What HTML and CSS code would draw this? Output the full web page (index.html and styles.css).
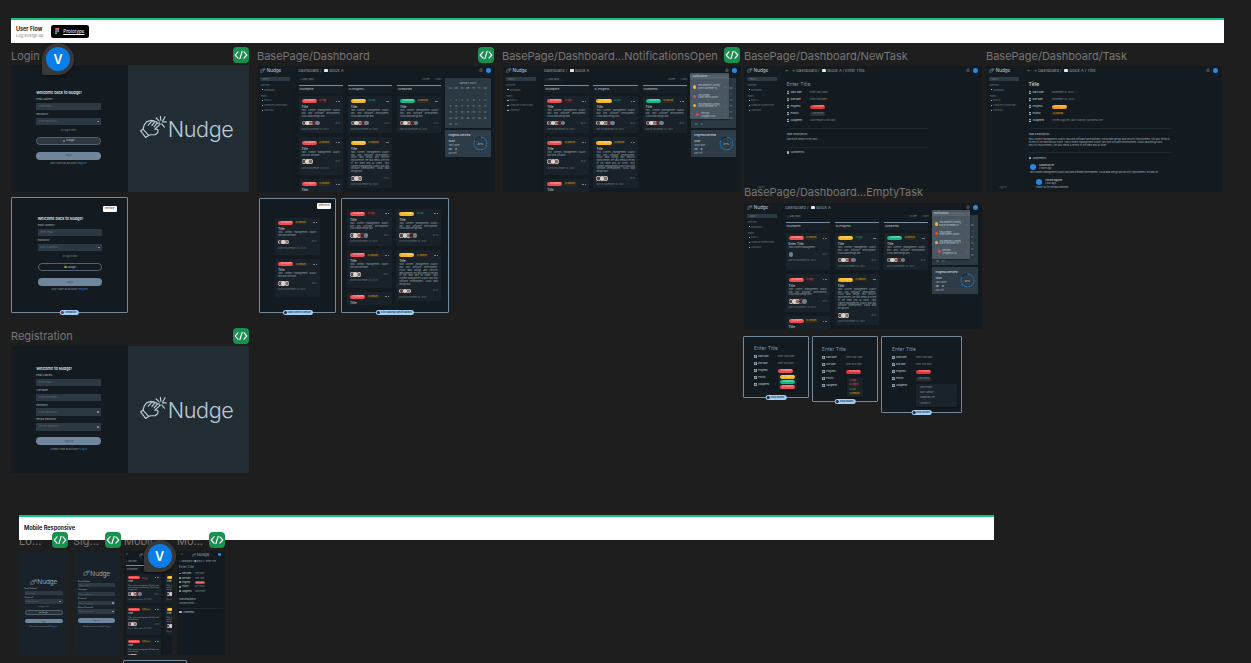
FILE: index.html
```html
<!DOCTYPE html>
<html lang="en">
<head>
<meta charset="utf-8">
<title>Nudge – User Flow</title>
<link rel="stylesheet" href="styles.css">
</head>
<body>
<svg class="defs" width="0" height="0">
  <symbol id="hand" viewBox="0 0 82 74">
    <g fill="none" stroke="currentColor" stroke-width="3.6" stroke-linejoin="round" stroke-linecap="round">
      <path d="M2 48 L9 43 L26 62 L17 68 Z"/>
      <path d="M9 43 L13 30 L20 21 L31 17 Q36 15 39 19 M25 31 L35 20 Q40 14 45 20 L36 32 M45 21 Q51 18 52 24 L43 36 M52 26 Q60 20 61 28 L45 43 Q53 42 55 46 L54 53 L46 60 L33 60 L26 62"/>
      <path d="M62 4 L63 16 M76 5 L69 18 M69 21 L80 21 M66 27 L74 37 M49 9 L58 18"/>
    </g>
  </symbol>
  <symbol id="code" viewBox="0 0 16 16">
    <path d="M5 4.8 L2.2 8 L5 11.2 M11 4.8 L13.8 8 L11 11.2 M9.1 4.4 L6.9 11.6" fill="none" stroke="#fff" stroke-width="1.2" stroke-linecap="round" stroke-linejoin="round"/>
  </symbol>
  <symbol id="bell" viewBox="0 0 10 10">
    <path d="M1.5 7.5 L2.5 6 V4 Q2.5 1.5 5 1.5 Q7.5 1.5 7.5 4 V6 L8.5 7.5 Z M4 9 H6" fill="none" stroke="currentColor"/>
  </symbol>
  <symbol id="figma" viewBox="0 0 8 12">
    <path d="M2 0H4V4H2A2 2 0 0 1 2 0Z" fill="#f24e1e"/><path d="M4 0H6A2 2 0 0 1 6 4H4Z" fill="#ff7262"/>
    <path d="M2 4H4V8H2A2 2 0 0 1 2 4Z" fill="#a259ff"/><circle cx="6" cy="6" r="2" fill="#1abcfe"/>
    <path d="M2 8H4V10A2 2 0 1 1 2 8Z" fill="#0acf83"/>
  </symbol>
</svg>
<main class="canvas">
  <span class="label l-login">Login</span>
  <span class="label l-dash">BasePage/Dashboard</span>
  <span class="label l-notif">BasePage/Dashboard...NotificationsOpen</span>
  <span class="label l-new">BasePage/Dashboard/NewTask</span>
  <span class="label l-task">BasePage/Dashboard/Task</span>
  <span class="label l-reg">Registration</span>
  <span class="label l-m1">Lo...</span>
  <span class="label l-m2">Sig...</span>
  <span class="label l-m3">Mobil...</span>
  <span class="label l-m4">Mo...</span>

  <header class="banner banner-flow">
    <div class="banner-text"><b>User Flow</b><span>Log In/Sign up</span></div>
    <a class="proto"><svg><use href="#figma"/></svg><u>Prototype</u></a>
  </header>
  <header class="banner banner-mobile"><div class="banner-text"><b>Mobile Responsive</b></div></header>

  <section class="frame split f-login" data-auth="login"></section>
  <section class="frame split f-reg" data-auth="register"></section>
  <section class="frame f-dash" data-board="calendar"></section>
  <section class="frame f-notif" data-board="notifications"></section>
  <section class="frame f-empty" data-board="empty"></section>
  <section class="frame f-new" data-task="new"></section>
  <section class="frame f-task" data-task="full"></section>
  <span class="label l-empty">BasePage/Dashboard...EmptyTask</span>

  <section class="variant v-login" data-variant="login"></section>
  <section class="variant v-cards" data-variant="cards"></section>
  <section class="variant v-spacing" data-variant="spacing"></section>
  <section class="variant v-drop1" data-variant="progress"></section>
  <section class="variant v-drop2" data-variant="priority"></section>
  <section class="variant v-drop3" data-variant="assignee"></section>
  <section class="variant v-mobile"></section>

  <section class="frame phone f-m1" data-phone="login"></section>
  <section class="frame phone f-m2" data-phone="register"></section>
  <section class="frame phone f-m3" data-phone="board"></section>
  <section class="frame phone f-m4" data-phone="task"></section>

  <svg class="code c1"><use href="#code"/></svg>
  <svg class="code c2"><use href="#code"/></svg>
  <svg class="code c3"><use href="#code"/></svg>
  <svg class="code c4"><use href="#code"/></svg>
  <svg class="code c5"><use href="#code"/></svg>
  <svg class="code c6"><use href="#code"/></svg>
  <svg class="code c7"><use href="#code"/></svg>
  <div class="pin p1"><span>V</span></div>
  <div class="pin p2"><span>V</span></div>
</main>
<script src="app.js"></script>
</body>
</html>
```

FILE: styles.css
```css
* { box-sizing: border-box; }
body { margin: 0; background: #1e1e1e; font-family: Inter, "Liberation Sans", sans-serif; }
.defs { position: absolute; }
.canvas { position: relative; width: 1251px; height: 663px; overflow: hidden; background: #1e1e1e; }

/* frame names */
.label { position: absolute; height: 14px; line-height: 14px; font-size: 11px; letter-spacing: 0; color: #767676; white-space: nowrap; }
.l-login { left: 11px; top: 49px; }
.l-dash { left: 257px; top: 49px; }
.l-notif { left: 502px; top: 49px; }
.l-new { left: 744px; top: 49px; }
.l-task { left: 986px; top: 49px; }
.l-empty { left: 744px; top: 185px; }
.l-reg { left: 11px; top: 329px; }
.l-m1 { left: 19px; top: 534px; }
.l-m2 { left: 73px; top: 534px; }
.l-m3 { left: 124px; top: 534px; }
.l-m4 { left: 177px; top: 534px; }

/* section banners */
.banner { position: absolute; display: flex; align-items: center; gap: 7px; height: 25px; padding: 0 5px; background: #fff; border-top: 2px solid #12c47c; }
.banner-flow { left: 11px; top: 18px; width: 1212.5px; }
.banner-mobile { left: 19px; top: 515px; width: 975px; padding-bottom: 2px; }
.banner-text { display: flex; flex-direction: column; gap: 1px; min-width: 27.5px; font-size: 5.6px; line-height: 6px; color: #000; white-space: nowrap; }
.banner-flow .banner-text { width: 27.5px; }
.banner-text span { font-size: 4px; line-height: 5px; color: #777; }
.banner-text b { font-weight: 600; }
.banner-flow b { font-size: 5.5px; }
.banner-mobile b { font-size: 5.6px; }
.proto { display: flex; align-items: center; gap: 4.5px; width: 38px; height: 13px; padding: 0 4px; border-radius: 2.5px; background: #000; color: #fff; font-size: 4.6px; }
.proto svg { width: 4.5px; height: 6.5px; }

.code { position: absolute; width: 16px; height: 16px; border-radius: 4px; background: #18904f; }
.c1 { left: 233px; top: 47px; }
.c2 { left: 478px; top: 47px; }
.c3 { left: 724px; top: 47px; }
.c4 { left: 233px; top: 328px; }
.c5 { left: 52px; top: 532px; }
.c6 { left: 105px; top: 532px; }
.c7 { left: 209px; top: 532px; }
.pin { position: absolute; display: grid; place-items: center; width: 32px; height: 32px; border-radius: 16px 16px 16px 2px; background: #383838; box-shadow: 0 1px 3px #0008; }
.pin span { display: grid; place-items: center; width: 24px; height: 24px; border-radius: 50%; background: #0a7de6; color: #fff; font-size: 12.5px; font-weight: 600; }
.p1 { left: 42px; top: 43px; }
.p2 { left: 143.5px; top: 540px; }

/* frames on the canvas */
.frame { position: absolute; overflow: hidden; background: #141b20; color: #9aa7b0; font-size: 2.5px; line-height: 3px; }
.f-login { left: 11px; top: 65px; width: 238px; height: 127px; }
.f-reg { left: 11px; top: 346px; width: 238px; height: 127px; }
.f-dash { left: 257px; top: 66px; width: 238px; height: 126px; }
.f-notif { left: 502.7px; top: 66px; width: 238px; height: 126px; }
.f-new { left: 744px; top: 66px; width: 238px; height: 126px; }
.f-task { left: 986px; top: 66px; width: 236px; height: 126px; }
.f-empty { left: 744px; top: 203px; width: 238px; height: 126px; }
.f-m1 { left: 19.5px; top: 551px; width: 48px; height: 104px; }
.f-m2 { left: 73px; top: 551px; width: 47px; height: 104px; }
.f-m3 { left: 124px; top: 551px; width: 48px; height: 104px; }
.f-m4 { left: 177px; top: 551px; width: 48px; height: 104px; }

/* authentication */
.split { display: grid; grid-template-columns: 117px 1fr; }
.split-left { padding: 25px 27px 0 25.3px; }
.f-reg .split-left { padding-top: 20px; }
.split-right { display: flex; align-items: center; background: #222c33; color: #b9cbd9; padding: 0 0 0 12px; }
.split-right svg { width: 27px; height: 24.4px; margin-top: -2px; }
.wordmark { margin-left: .8px; font-size: 21.6px; line-height: 24px; font-weight: 300; letter-spacing: -.4px; }
.form { display: flex; flex-direction: column; color: #a9b5bd; font-size: 2.4px; }
.form h2 { margin: 0 0 2.6px; font-size: 3.75px; line-height: 5.5px; font-weight: 600; color: #dfe6ea; white-space: nowrap; }
.form label { height: 4px; line-height: 4px; margin-bottom: .7px; }
.input { display: flex; align-items: center; justify-content: space-between; height: 7.5px; padding: 0 2.5px; margin-bottom: 2.6px; border-radius: .6px; background: #2c3943; color: #5c6b77; }
.eye { width: 2px; height: 1.6px; border-radius: 50%; background: #93a3af; }
.or { align-self: center; height: 4px; line-height: 4px; margin: 1.1px 0 4.2px; color: #7d8991; }
.btn { display: flex; align-items: center; justify-content: center; gap: 1px; height: 8px; border-radius: 4px; }
.btn-google { border: 1px solid #52616c; background: #2b3841; color: #b8c4cc; margin-bottom: 7px; }
.btn-google::before { content: ""; width: 2.5px; height: 2.5px; border-radius: 50%; background: #8d9154; }
.btn-main { background: #70869a; color: #34424e; margin-bottom: 2.3px; }
.f-reg .btn-main { margin-top: 4.2px; }
.foot { align-self: center; height: 4px; line-height: 4px; color: #87939b; white-space: nowrap; }
.foot i { font-style: normal; color: #3b82d6; }

/* application shell */
.app { display: grid; grid-template-columns: 36.5px 1fr; height: 100%; }
.side { display: flex; flex-direction: column; padding: 2.2px 3.4px 0; color: #6d7981; font-size: 2.05px; line-height: 3px; background: #141c21; white-space: nowrap; }
.brand { display: flex; align-items: center; gap: .8px; height: 5.5px; color: #c5d1da; font-size: 4.6px; line-height: 5px; }
.brand svg { width: 5.6px; height: 5px; }
.search { height: 4px; margin: 3.6px 0 2.7px; padding: .5px 2px; background: #2c3a44; border-radius: .5px; }
.side p { margin: 0 0 1.6px; }
.side .gap { margin-top: 1px; }
.side .item { padding-left: 1.4px; margin-bottom: 2px; }
.side .item::before { content: ""; display: inline-block; width: 1.5px; height: 1.2px; margin: 0 .8px .4px 0; background: #aab3b9; }
.side .out { margin: auto 0 2.6px 10px; }
.top { display: flex; align-items: center; gap: 1.5px; height: 8.7px; padding: 0 4px 0 4.7px; background: #131b20; color: #919ea7; font-size: 4px; line-height: 5px; white-space: pre; }
.top .folder { width: 3.8px; height: 3px; background: #dfe6e9; border-radius: .4px; }
.top .bell { width: 4px; height: 4px; margin-left: auto; color: #a3adb3; }
.top .user { width: 4.6px; height: 4.6px; margin-left: 2px; border-radius: 50%; background: #2788dc; }
.work { display: grid; grid-template-columns: 143px 45.5px; gap: 3.5px; padding-left: 5px; position: relative; }
.tools { display: flex; align-items: center; gap: 5px; height: 10.5px; color: #7d8992; font-size: 2.4px; }
.tools span:first-child { margin-right: auto; padding: .5px 2px; background: #192228; }
.cols { display: grid; grid-template-columns: repeat(3, 44.5px); gap: 4.7px; align-items: start; }
.col { display: flex; flex-direction: column; gap: 4px; }
.col-head { height: 8.3px; margin-bottom: -1.6px; padding: 2.3px 1px; border-top: 1px solid #798d9b; background: #172026; color: #c6d0d6; font-size: 2.7px; }

.card { display: flex; flex-direction: column; min-height: 37.5px; padding: 3.3px 3px 2px; border-radius: .7px; background: #192228; color: #98a4ac; }
.tags { display: flex; align-items: center; gap: 1.5px; height: 4px; }
.tag { display: inline-block; width: 15.3px; height: 4px; border-radius: 2px; padding-left: 3px; font-size: 2.1px; line-height: 4px; color: #ffffffb0; background: #ee4c50; white-space: nowrap; }
.tag.yellow { background: #f3b61f; }
.tag.green { background: #16b783; }
.tag.red { background: #e03436; }
.tag.orange { background: #f29a1f; }
.tag.gray { background: #2a3238; color: #7d878e; }
.prio { height: 3.4px; padding: 0 1px; border-radius: 1.5px; font-size: 2px; line-height: 3.4px; color: #cf9c27; background: #2d2b20; white-space: nowrap; }
.prio.high { color: #e04b50; background: #2a2026; }
.prio.low { color: #29a886; background: #182b2b; }
.dots { display: flex; gap: .5px; margin-left: auto; }
.dots i { width: .9px; height: .9px; border-radius: 50%; background: #b2bcc3; }
.card h3 { margin: 2.1px 0 1px; font-size: 3.1px; line-height: 4px; font-weight: 500; color: #ccd5da; }
.card p { margin: 0; font-size: 2.15px; line-height: 2.75px; text-align: justify; }
.lines-1 { height: 2.75px; }
.lines-2 { height: 5.5px; }
.lines-3 { height: 8.25px; }
.lines-8 { height: 22px; }
.people { display: flex; align-items: center; height: 5px; margin: 2px 0 2.3px; font-size: 2.1px; }
.people i { width: 4.6px; height: 4.6px; margin-right: -1.2px; border-radius: 50%; background: radial-gradient(circle, #5b4340 50%, #d0d2d4 62%); }
.people i:nth-child(2) { background: #d9d3cf; }
.people i:nth-child(3) { background: radial-gradient(circle, #8a6b5e 40%, #d8d2cd 62%); }
.people i:nth-child(4) { background: radial-gradient(circle, #3b2326 40%, #a33a42 62%); }
.people i.more { background: #71818d; }
.people span { margin-left: auto; color: #75818a; }
.card small { font-size: 2.1px; line-height: 3px; color: #6f7b83; white-space: nowrap; }

.aside { display: flex; flex-direction: column; gap: 2.7px; padding-top: 3.8px; }
.cal { height: 49.3px; padding: 3.3px 2.5px; border-radius: .6px; background: #2b3943; color: #9aa8b2; text-align: center; }
.cal b { display: block; margin-bottom: 1.2px; font-size: 2.5px; font-weight: 500; }
.days { display: grid; grid-template-columns: repeat(7, 1fr); font-size: 2.1px; line-height: 6px; }
.prog { display: flex; justify-content: space-between; height: 26.5px; padding: 3.4px 2.6px 2px 3.5px; border-radius: .6px; background: #2e3c47; color: #a3b1bb; font-size: 2px; line-height: 2.4px; }
.prog div { display: flex; flex-direction: column; width: 20px; white-space: nowrap; }
.prog b { font-size: 2.4px; line-height: 3.6px; font-weight: 600; color: #d2dbe1; }
.prog b + b { margin-top: 3px; }
.prog .pair { margin-top: 1.8px; }
.prog svg { width: 15px; height: 15px; margin-top: 2px; }
.pop { position: absolute; left: 151px; top: -1.3px; width: 38.5px; height: 46px; padding: 1.6px 2.5px; background: #4d5a65e8; border-radius: .8px; color: #bcc8d0; font-size: 1.9px; line-height: 2.5px; white-space: nowrap; box-shadow: 0 1px 2px #0006; }
.f-empty .pop { height: 48.5px; }
.pop h4 { margin: 0 -2.5px 3.4px; padding: 0 2.5px 1px; background: #56636e; font-size: 2.4px; line-height: 3px; font-weight: 500; }
.pop div { display: grid; grid-template-columns: 3px 1fr 1.5px; gap: 1.8px; align-items: center; height: 9.2px; padding-left: .5px; }
.pop div::before { content: ""; width: 3.2px; height: 3.2px; border-radius: 50%; background: #f3b61f; }
.pop div.r::before { background: #e3494e; }
.pop div:last-child { padding-left: 3.5px; }

/* task detail */
.detail { padding: 6.3px 0 0 6px; width: 148px; }
.detail h1, .variant h1 { margin: 0; font-size: 5px; line-height: 6.4px; font-weight: 400; color: #84919a; }
.f-task h1 { font-weight: 600; color: #c9d3d9; }
.rows { display: grid; grid-auto-rows: 7px; align-items: center; margin-top: 1.8px; }
.row { display: grid; grid-template-columns: 4px 19.6px 1fr; align-items: center; height: 7px; font-size: 2.35px; color: #7f8b93; white-space: nowrap; }
.row::before { content: ""; width: 2.6px; height: 2.8px; background: radial-gradient(circle, #3a454c 30%, #aeb9c0 60%); border-radius: .6px; }
.row b { font-weight: 500; color: #bcc6cc; }
.row .tag, .row .prio { justify-self: start; }
.desc { margin-top: 3.4px; padding: 4.5px 0; border-top: 1px solid #1d272d; border-bottom: 1px solid #1d272d; font-size: 2.3px; line-height: 2.8px; }
.desc b, .comm { display: block; font-size: 2.6px; line-height: 3.4px; font-weight: 500; color: #aab5bc; }
.desc p { margin: 3px 0 0; }
.comm { margin-top: 3.5px; }
.comm::before { content: ""; display: inline-block; width: 2.8px; height: 2.4px; margin-right: 1.4px; border-radius: .4px; background: #a9b4bb; }
.reply { display: grid; grid-template-columns: 6px 1fr; gap: 0 3.5px; margin-top: 3.2px; padding-left: 1px; font-size: 2.2px; line-height: 3px; white-space: nowrap; color: #a9b4bb; }
.reply::before { content: ""; width: 6px; height: 6px; border-radius: 50%; background: #2788dc; grid-row: span 2; }
.reply em { grid-column: 1 / -1; font-style: normal; margin-top: 1px; }
.reply.nested { margin-left: 6px; margin-top: 5px; }

/* prototype variants */
.variant { position: absolute; border: 1.3px solid #74899a; border-radius: 1px; background: #141b20; font-size: 2.5px; line-height: 3px; color: #87939b; }
.v-login { left: 10.5px; top: 197px; width: 117.5px; height: 115.5px; padding: 18.2px 25px 0 26.2px; }
.v-login .btn-google { background: none; }
.v-cards { left: 259px; top: 198px; width: 77px; height: 115px; padding: 18.5px 15px; display: flex; flex-direction: column; gap: 4px; }
.v-cards .card { width: 44.5px; }
.v-spacing { left: 340.5px; top: 198px; width: 108.5px; height: 115px; padding: 9.5px 5.5px 7px; }
.v-spacing .cols { height: 96px; overflow: hidden; grid-template-columns: repeat(2, 44.5px); }
.v-drop1 { left: 743px; top: 336px; width: 66px; height: 62px; padding: 7.8px 9px 0 10px; }
.v-drop2 { left: 812px; top: 336px; width: 66px; height: 66px; padding: 8.5px 9px 0 9px; }
.v-drop3 { left: 881px; top: 336px; width: 81px; height: 77px; padding: 8.5px 9px 0 10px; }
.v-mobile { left: 123px; top: 660px; width: 64px; height: 10px; }
.variant .rows { margin-top: 2.2px; }
.variant .row { grid-template-columns: 4px 20px 1fr; font-size: 2.2px; }
.pill { position: absolute; left: 50%; bottom: -3.2px; transform: translateX(-50%); display: flex; align-items: center; gap: 1px; height: 5px; padding: 0 2px 0 1px; border-radius: 2.5px; background: #a7d0f6; color: #12283c; font-size: 2.3px; font-weight: 600; white-space: nowrap; }
.pill::before { content: ""; width: 3px; height: 3px; border-radius: 50%; background: #14293b; }
.v-login .pill::before { background: #8b2637; }
.chip { position: absolute; right: 10.5px; top: 7.6px; width: 14px; height: 6px; border-radius: 1px; background: #fff; color: #333; font-size: 2.3px; line-height: 6px; text-align: center; }
.v-cards .chip { right: 4px; top: 4px; }
.menu { position: absolute; display: flex; flex-direction: column; padding: 1px 1.5px; background: #1a2329; box-shadow: 0 1px 2px #0006; }
.v-drop1 .menu { left: 34px; top: 37px; width: 19px; gap: .8px; }
.v-drop2 .menu { left: 34px; top: 41px; width: 16px; height: 19px; gap: .9px; align-items: flex-start; }
.v-drop3 .menu { left: 34px; top: 47px; width: 41px; height: 22.5px; padding: 2px 4px; gap: 2.2px; font-size: 2.2px; }

/* phones */
.phone { font-size: 2px; line-height: 2.4px; }
.f-m1, .f-m2 { background: #192229; }
.phone .logo { display: flex; align-items: center; justify-content: center; gap: .6px; color: #b9cbd9; font-size: 6.4px; line-height: 8px; font-weight: 300; }
.phone .logo svg { width: 7px; height: 6.3px; }
.phone .form { padding: 0 5px; font-size: 1.8px; }
.phone .form label { height: 3px; line-height: 3px; margin-bottom: .3px; }
.phone .input { height: 4.4px; margin-bottom: 1px; padding: 0 1.2px; }
.phone .or { height: 3px; line-height: 3px; margin: .6px 0 1.8px; }
.phone .btn { height: 4.6px; }
.phone .btn-google { margin-bottom: 4px; background: #242f37; }
.phone .btn-google::before { width: 1.6px; height: 1.6px; }
.phone .btn-main { margin-bottom: 1px; }
.f-m1 { padding-top: 27px; }
.f-m1 .form { margin-top: 1.3px; }
.f-m2 { padding-top: 18.5px; }
.f-m2 .form { margin-top: 2px; }
.f-m2 .input { margin-bottom: 1.2px; }
.f-m2 .btn-main { margin-top: 3.4px; }
.mtop { display: flex; align-items: center; justify-content: space-between; height: 7px; padding: 0 2px; color: #a9b5bd; }
.mtop .logo { font-size: 4px; line-height: 5px; }
.mtop .logo svg { width: 4px; height: 4px; }
.mtop .user { width: 2.6px; height: 2.6px; border-radius: 50%; background: #2788dc; }
.f-m3 .bar { height: 8px; margin: 0 13px 0 2px; padding-top: 2px; border-bottom: 1px solid #798d9b; }
.f-m3 .bar + p { margin: 2px 3px; height: 4px; }
.f-m3 .cols { grid-template-columns: 35px 35px; gap: 3.5px; padding-left: 2px; }
.f-m3 .col { gap: 3.2px; }
.f-m3 .card { height: 28.8px; min-height: 28.8px; padding: 2.3px 2px 1px; }
.f-m3 .tag { width: 12px; height: 3px; padding-left: 1.6px; line-height: 3px; font-size: 1.7px; }
.f-m3 .tags { height: 3px; gap: 1px; }
.f-m3 .prio { height: 2.6px; font-size: 1.6px; line-height: 2.6px; }
.f-m3 .card h3 { margin: 1px 0 .5px; font-size: 2.4px; line-height: 3px; }
.f-m3 .card p { font-size: 1.7px; line-height: 2.3px; }
.f-m3 .lines-2 { height: 4.6px; }
.f-m3 .lines-3 { height: 6.9px; }
.f-m3 .people { height: 4px; margin: 1.6px 0 1.3px; font-size: 1.8px; }
.f-m3 .people i { width: 3.8px; height: 3.8px; }
.f-m3 .card small { font-size: 1.8px; line-height: 2.4px; }
.f-m4 { padding: 0 2px; white-space: nowrap; }
.f-m4 h1 { margin: 3px 0 2px; font-size: 3.1px; line-height: 3.4px; font-weight: 400; }
.f-m4 .crumb { margin-top: 2.5px; font-size: 2.1px; }
.f-m4 .row { grid-template-columns: 3px 13px 1fr; height: 4.4px; font-size: 1.9px; }
.f-m4 .row::before { width: 1.8px; height: 1.8px; }
.f-m4 .rows { display: block; margin: 0; }
.f-m4 .tag { width: 10px; height: 2.8px; padding-left: 1px; line-height: 2.8px; font-size: 1.6px; }
.f-m4 .desc { border-top: 0; padding: 1px 0 3px; font-size: 1.9px; line-height: 2.4px; }
.f-m4 .desc p { margin-top: 1.2px; }
.f-m4 .desc b, .f-m4 .comm { font-size: 2.1px; }
.f-m4 .comm { margin-top: 2px; }
```

FILE: app.js
```js
const all = (key, render) =>
  document.querySelectorAll(`[data-${key}]`).forEach(el => { el.innerHTML = render(el.dataset[key]); });

const hand = '<svg><use href="#hand"/></svg>';
const lorem = 'Task content management Quality task and software development, Cloud data design and security improvement, the task needs a review of the team and all notes. ';
/* Whole words that fill about the given number of card lines */
const excerpt = lines => {
  const text = lorem.repeat(2).slice(0, lines * 31 - 4);
  return text.slice(0, text.lastIndexOf(' '));
};
const tag = (color, text) => `<span class="tag ${color}">${text}</span>`;
const prio = (kind, text) => `<span class="prio ${kind}">○ ${text}</span>`;

/* Forms */
const field = (name, hint, eye) =>
  `<label>${name}</label><div class="input"><span>${hint}</span>${eye ? '<i class="eye"></i>' : ''}</div>`;
const loginForm = title => `<div class="form">${title ? '<h2>Welcome back to Nudge!</h2>' : ''}
  ${field('Email Address*', 'Enter email')}${field('Password*', 'Enter password', true)}
  <span class="or">or log in with</span><div class="btn btn-google">Google</div>
  <div class="btn btn-main">Log in</div><span class="foot">Don't have an account? <i>Register</i></span></div>`;
const registerForm = title => `<div class="form">${title ? '<h2>Welcome to Nudge!</h2>' : ''}
  ${field('Email Address', 'Enter email')}${field('Username', 'Enter username')}
  ${field('Password', 'Enter password', true)}${field('Retype Password', 'Retype password', true)}
  <div class="btn btn-main">Sign up</div><span class="foot">Already have an account? <i>Log in</i></span></div>`;
all('auth', kind => `<div class="split-left">${kind === 'login' ? loginForm(true) : registerForm(true)}</div>
  <div class="split-right">${hand}<span class="wordmark">Nudge</span></div>`);

/* Cards */
const card = (color, kind, lines, people = 3, title = 'Title') => {
  const state = { '': 'Incomplete', yellow: 'In-Progress', green: 'Completed' }[color];
  const level = { high: 'High', low: 'Low', '': 'Medium' }[kind];
  const faces = '<i></i>'.repeat(Math.min(people, 4)) + (people > 3 || people === 0 ? '<i class="more"></i>' : '');
  return `<article class="card"><div class="tags">${tag(color, state)}${prio(kind, level)}<span class="dots"><i></i><i></i><i></i></span></div>
    <h3>${title}</h3><p class="lines-${lines}">${excerpt(lines)}</p>
    <div class="people">${faces}<span>▢ 12</span></div><small>Due on November 20, 2023</small></article>`;
};
const col = (name, cards) => `<div class="col">${name ? `<div class="col-head">${name}</div>` : ''}${cards.join('')}</div>`;

/* Application shell */
const shell = (crumb, body) => `<div class="app"><nav class="side">
  <div class="brand">${hand}Nudge</div><div class="search">Search</div>
  <p>Overview</p><p class="item">Dashboard</p><p class="gap">Teams</p>
  <p class="item">Block A</p><p class="item">Computer Science Dept.</p><p class="item">Add Block</p><p class="out">Log out</p></nav>
  <div><div class="top">${crumb}<svg class="bell"><use href="#bell"/></svg><i class="user"></i></div>${body}</div></div>`;
const dates = [...Array(6).fill(''), ...Array.from({ length: 31 }, (_, i) => i + 1)];
const calendar = `<div class="cal"><b>January 2024</b><div class="days">${['Su','Mo','Tu','We','Th','Fr','Sa', ...dates]
  .map(d => `<span>${d}</span>`).join('')}</div></div>`;
const progress = `<div class="prog"><div><b>Progress Overview</b><b>12/87</b><span>Tasks done</span><b class="pair">20 &nbsp; &nbsp; &nbsp;8</b><span>Days left</span></div>
  <svg viewBox="0 0 30 30"><circle cx="15" cy="15" r="13" fill="none" stroke="#18242d" stroke-width="2"/>
  <path d="M15 2A13 13 0 1 1 4 8" fill="none" stroke="#2878bd" stroke-width="2"/>
  <text x="15" y="17" text-anchor="middle" font-size="5" fill="#c3ced6">87%</text></svg></div>`;
const notes = `<div class="pop"><h4>Notifications</h4><div><span>Task deadline is coming<br>Due on November 20</span>›</div>
  <div class="r"><span>Task overdue<br>Submit before January</span>›</div><div><span>Task deadline is coming<br>Due on November 20</span>›</div>
  <div class="r"><span>New task<br>Assigned to you</span>›</div></div>`;

all('board', kind => {
  const incomplete = [card('', 'high', 3, 4), card('', '', 2), card('', '', 2)];
  if (kind === 'empty') incomplete.splice(0, 3, card('', '', 1, 0, 'Enter Title'), card('', 'high', 3, 4), card('', '', 2));
  return shell('Dashboard / <i class="folder"></i>Block A', `<div class="work"><div>
    <div class="tools"><span>+ Add Task</span><span>⊽ Filter</span><span>≡ Sort</span></div><div class="cols">
    ${col('Incomplete', incomplete)}${col('In-Progress', [card('yellow', 'low', 3, 4), card('yellow', '', 8)])}
    ${col('Completed', [card('green', '', 3, 4)])}</div></div>
    <div class="aside">${calendar}${progress}</div>${kind === 'calendar' ? '' : notes}</div>`);
});

/* Task detail */
const row = (name, value) => `<div class="row"><b>${name}</b>${value}</div>`;
const wrap = text => `<span>${text}</span>`;
all('task', kind => {
  const full = kind === 'full';
  const title = full ? 'Title' : 'Enter Title';
  return shell(`←  → Dashboard / <i class="folder"></i>Block A / ${title}`, `<div class="detail"><h1>${title}</h1><div class="rows">
    ${row('Start Date', wrap(full ? 'November 13, 2023' : 'Enter Start Date'))}${row('Due Date', wrap(full ? 'November 20, 2023' : 'Enter Due Date'))}
    ${row('Progress', full ? tag('orange', 'In-Progress') : tag('red', 'Incomplete'))}
    ${row('Priority', full ? prio('', 'Medium') : tag('gray', 'Set Priority'))}
    ${row('Assignees', wrap(full ? 'Vincent Nguyen, Mary Watson, Samantha Lee' : 'Add People to this task'))}</div>
    <div class="desc"><b>Task Description</b><p>${full ? lorem.repeat(2) : 'Add more details to this task...'}</p></div>
    <span class="comm">Comments</span>${full ? `<div class="reply"><b>Samantha Lee</b><span>2 hours ago</span><em>${lorem.slice(0, 118)}</em></div>
    <div class="reply nested"><b>Vincent Nguyen</b><span>1 hour ago</span><em>Thank you for the task reminder.</em></div>` : ''}</div>`);
});

/* Variants */
const enter = (state, level) => `<h1>Enter Title</h1><div class="rows">${row('Start Date', wrap('Enter Start Date'))}
  ${row('Due Date', wrap('Enter Due Date'))}${row('Progress', tag(state, 'Incomplete'))}${row('Priority', level)}${row('Assignees', '')}</div>`;
const variants = {
  login: ['Animation', () => `<span class="chip">Interface</span>${loginForm(true)}`],
  cards: ['Card context overlay', () => `<span class="chip">Reference</span>${card('', '', 2)}${card('', '', 2)}`],
  spacing: ['Grid Spacing/Specifications', () => `<div class="cols">${col('', [card('', 'high', 3, 4), card('', '', 2), card('', '', 2)])}
    ${col('', [card('yellow', 'low', 3, 4), card('yellow', '', 8)])}</div>`],
  progress: ['Drop Downs', () => `${enter('', '')}<div class="menu">${tag('yellow', 'In-Progress')}${tag('green', 'Completed')}${tag('', 'Incomplete')}</div>`],
  priority: ['Drop Downs', () => `${enter('red', '')}<div class="menu">${prio('high', 'High')}${prio('high', 'Urgent')}${prio('low', 'Low')}${prio('', 'Medium')}</div>`],
  assignee: ['Drop Downs', () => `${enter('red', tag('gray', 'Set Priority'))}<div class="menu"><span>Add People</span><span>Mary Watson</span><span>Samantha Lee</span><span>Vincent N</span></div>`],
};
all('variant', kind => `${variants[kind][1]()}<span class="pill">${variants[kind][0]}</span>`);

/* Phones */
const logo = `<div class="logo">${hand}Nudge</div>`;
const phones = {
  login: () => logo + loginForm(false),
  register: () => logo + registerForm(false),
  board: () => `<div class="mtop"><span>☰</span>${logo}<i class="user"></i></div><div class="bar">+ Add Task</div><p>Incomplete</p>
    <div class="cols">${col('', [card('', 'high', 3, 4), card('', '', 2), card('', '', 2)])}${col('', [card('yellow', 'low', 3, 4), card('yellow', '', 3)])}</div>`,
  task: () => `<div class="mtop"><span>☰</span>${logo}<i class="user"></i></div><div class="crumb">← Dashboard / ■ Block A / Enter Title</div>
    <h1>Enter Title</h1><div class="rows">${row('Start Date', wrap('Enter Date'))}${row('Due Date', wrap('Enter Date'))}${row('Progress', tag('red', 'Incomplete'))}
    ${row('Priority', wrap('Set Priority'))}${row('Assignees', wrap('Add People'))}</div>
    <div class="desc"><b>Task Description</b><p>Add more details...</p></div><span class="comm">Comments</span>`,
};
all('phone', kind => phones[kind]());
```
